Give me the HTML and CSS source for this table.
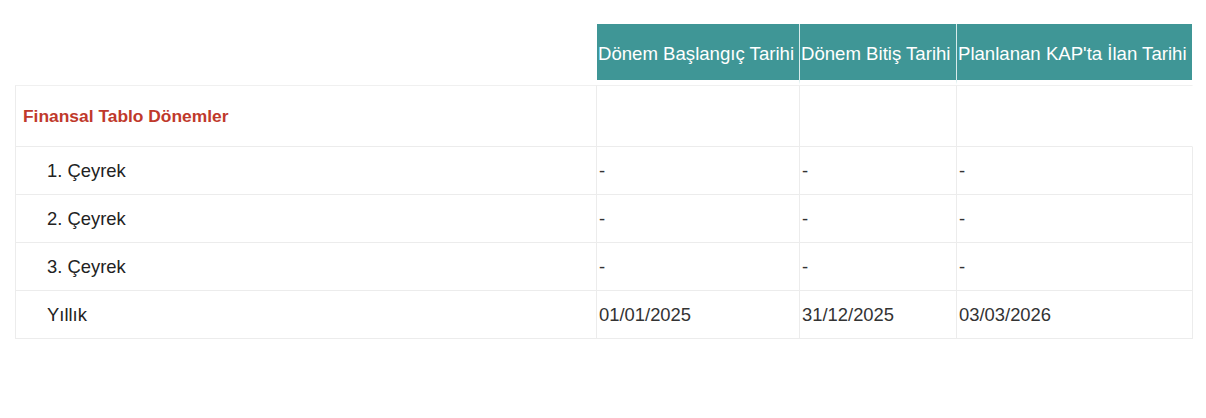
FILE: index.html
```html
<!DOCTYPE html>
<html lang="tr">
<head>
<meta charset="utf-8">
<link rel="stylesheet" href="styles.css">
</head>
<body>
<div class="wrap">
<table class="periods">
  <thead>
    <tr class="head">
      <th class="c1 blank"></th>
      <th class="c2">Dönem Başlangıç Tarihi</th>
      <th class="c3">Dönem Bitiş Tarihi</th>
      <th class="c4 last">Planlanan KAP'ta İlan Tarihi</th>
    </tr>
  </thead>
  <tbody>
    <tr class="section">
      <td class="title">Finansal Tablo Dönemler</td>
      <td></td><td></td><td class="noright"></td>
    </tr>
    <tr><td class="label">1. Çeyrek</td><td>-</td><td>-</td><td>-</td></tr>
    <tr><td class="label">2. Çeyrek</td><td>-</td><td>-</td><td>-</td></tr>
    <tr><td class="label">3. Çeyrek</td><td>-</td><td>-</td><td>-</td></tr>
    <tr><td class="label">Yıllık</td><td>01/01/2025</td><td>31/12/2025</td><td>03/03/2026</td></tr>
  </tbody>
</table>
</div>
</body>
</html>
```
FILE: styles.css
```css
html, body {
  margin: 0;
  padding: 0;
  background: #ffffff;
}
body {
  font-family: "Liberation Sans", Arial, sans-serif;
  color: #333333;
}
.wrap {
  padding: 24px 0 0 15px;
}
.periods {
  border-collapse: separate;
  border-spacing: 0;
  table-layout: fixed;
  width: 1178px;
}
.periods th,
.periods td {
  box-sizing: border-box;
}
.c1 { width: 582px; }
.c2 { width: 203px; }
.c3 { width: 157px; }
.c4 { width: 236px; }

.head th {
  height: 61px;
  padding: 4px 0 0 1px;
  background: #3f9696;
  background-clip: padding-box;
  color: #ffffff;
  font-weight: normal;
  font-size: 18.6px;
  text-align: left;
  white-space: nowrap;
  border-right: 1px solid #d8ebeb;
  border-bottom: 5px solid transparent;
}
.head th.last {
  border-right-color: transparent;
}
.head th.blank {
  background: transparent;
  border-right-color: transparent;
}
tbody td {
  border-right: 1px solid #ececec;
  border-bottom: 1px solid #ececec;
  padding: 1px 0 0 2px;
  font-size: 18.4px;
  height: 48px;
  vertical-align: middle;
  overflow: hidden;
  white-space: nowrap;
}
tbody td:first-child {
  border-left: 1px solid #ececec;
}
tbody tr.section td {
  height: 62px;
  border-top: 1px solid #f0f0f0;
  padding-top: 0;
}
tbody td.noright {
  border-right-color: transparent;
}
td.title {
  color: #c0392b;
  font-weight: bold;
  font-size: 17.4px;
  padding-left: 7px;
}
td.label {
  padding-left: 31px;
  color: #222222;
}
```
